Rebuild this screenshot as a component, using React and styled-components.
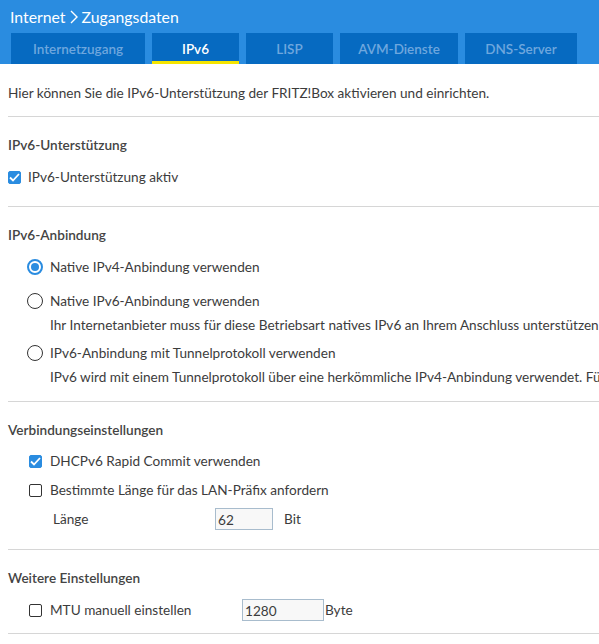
import React, { useState } from 'react';
import styled, { createGlobalStyle } from 'styled-components';

const GlobalStyle = createGlobalStyle`
  html, body {
    margin: 0;
    padding: 0;
    background: #fff;
  }
  body {
    font-family: Lato, "Noto Sans", sans-serif;
    color: #3c3c3c;
    overflow: hidden;
  }
`;

const Page = styled.div`
  width: 599px;
  overflow: hidden;
`;

const Header = styled.header`
  background: #2a8ce0;
  padding: 0 0 0 10px;
`;

const Breadcrumb = styled.h1`
  margin: 0;
  height: 33px;
  display: flex;
  align-items: center;
  gap: 4px;
  font-size: 15.8px;
  font-weight: 400;
  color: #fff;
`;

const TabBar = styled.nav`
  display: flex;
  gap: 7px;
  margin-left: 1px;
`;

const Tab = styled.button`
  width: ${(p) => p.$width}px;
  height: 31px;
  border: none;
  border-bottom: 3px solid ${(p) => (p.$active ? '#f5e500' : 'transparent')};
  padding: 3px 0 0;
  background: #066ac1;
  color: ${(p) => (p.$active ? '#fff' : '#6ea7de')};
  font-family: inherit;
  font-size: 13.5px;
  font-weight: 600;
  cursor: pointer;
`;

const Intro = styled.p`
  margin: 19px 0 13px 8px;
  line-height: 20px;
  font-size: 13.6px;
  white-space: nowrap;
`;

const Section = styled.section`
  border-top: 1px solid #d6d6d6;
  margin-left: 8px;
  padding: 18px 0 ${(p) => p.$bottom}px;
`;

const Heading = styled.h2`
  margin: 0 0 ${(p) => p.$after}px;
  line-height: 20px;
  font-size: 13.6px;
  font-weight: 600;
  color: #444;
`;

const Option = styled.label`
  display: flex;
  align-items: center;
  gap: 7px;
  height: 20px;
  width: ${(p) => (p.$width ? `${p.$width}px` : 'auto')};
  box-sizing: border-box;
  margin: ${(p) => p.$top || 0}px 0 0 ${(p) => p.$indent || 0}px;
  font-size: 13.6px;
  white-space: nowrap;
  flex-shrink: 0;
  cursor: pointer;
`;

const Slot = styled.span`
  width: 16px;
  display: flex;
  justify-content: center;
  flex-shrink: 0;
`;

const Box = styled.span`
  width: 13px;
  height: 13px;
  box-sizing: border-box;
  border-radius: 2px;
  border: 1px solid ${(p) => (p.$on ? '#2a8ce0' : '#333')};
  background: ${(p) => (p.$on ? '#2a8ce0' : '#fff')};
  display: flex;
  align-items: center;
  justify-content: center;
  flex-shrink: 0;
`;

const Radio = styled.span`
  width: 16px;
  height: 16px;
  box-sizing: border-box;
  border-radius: 50%;
  border: ${(p) => (p.$on ? '2px solid #2a8ce0' : '1.5px solid #333')};
  display: flex;
  align-items: center;
  justify-content: center;
  flex-shrink: 0;

  &::after {
    content: '';
    width: 8px;
    height: 8px;
    border-radius: 50%;
    background: ${(p) => (p.$on ? '#2a8ce0' : 'transparent')};
  }
`;

const Hint = styled.div`
  margin: ${(p) => p.$top}px 0 0 42px;
  line-height: 20px;
  font-size: 13.6px;
  white-space: nowrap;
`;

const FieldRow = styled.div`
  display: flex;
  align-items: center;
  height: 22px;
  margin-top: ${(p) => p.$top}px;
  font-size: 13.6px;
  white-space: nowrap;
`;

const FieldLabel = styled.span`
  width: ${(p) => p.$width}px;
  padding-left: ${(p) => p.$indent}px;
  box-sizing: border-box;
  flex-shrink: 0;
`;

const NumberInput = styled.input`
  width: ${(p) => p.$width}px;
  height: 22px;
  box-sizing: border-box;
  border: 1px solid #a8bccd;
  background: #f8f8f8;
  padding: 2px 2px 0;
  margin: 0 ${(p) => p.$gap}px 0 0;
  font-family: inherit;
  font-size: 13.6px;
  color: #3c3c3c;
  flex-shrink: 0;
`;

const Chevron = () => (
  <svg width="8" height="14" viewBox="0 0 8 14">
    <path d="M1 1l6 6-6 6" fill="none" stroke="#fff" strokeWidth="1.4" />
  </svg>
);

const Check = ({ checked }) => (
  <Box $on={checked}>
    {checked && (
      <svg width="11" height="9" viewBox="0 0 11 9">
        <path d="M1 4.5l3 3L10 1" fill="none" stroke="#fff" strokeWidth="1.8" />
      </svg>
    )}
  </Box>
);

const tabs = [
  { label: 'Internetzugang', width: 134 },
  { label: 'IPv6', width: 87 },
  { label: 'LISP', width: 87 },
  { label: 'AVM-Dienste', width: 118 },
  { label: 'DNS-Server', width: 112 },
];

const modes = [
  { id: 'v4', label: 'Native IPv4-Anbindung verwenden' },
  {
    id: 'v6',
    label: 'Native IPv6-Anbindung verwenden',
    hint: 'Ihr Internetanbieter muss für diese Betriebsart natives IPv6 an Ihrem Anschluss unterstützen.',
  },
  {
    id: 'tunnel',
    label: 'IPv6-Anbindung mit Tunnelprotokoll verwenden',
    hint: 'IPv6 wird mit einem Tunnelprotokoll über eine herkömmliche IPv4-Anbindung verwendet. Für die Nutzung',
  },
];

export default function App() {
  const [tab, setTab] = useState('IPv6');
  const [mode, setMode] = useState('v4');

  return (
    <Page>
      <GlobalStyle />
      <Header>
        <Breadcrumb>
          Internet <Chevron /> Zugangsdaten
        </Breadcrumb>
        <TabBar>
          {tabs.map((t) => (
            <Tab key={t.label} $width={t.width} $active={tab === t.label} onClick={() => setTab(t.label)}>
              {t.label}
            </Tab>
          ))}
        </TabBar>
      </Header>

      <Intro>Hier können Sie die IPv6-Unterstützung der FRITZ!Box aktivieren und einrichten.</Intro>

      <Section $bottom={19}>
        <Heading $after={12}>IPv6-Unterstützung</Heading>
        <Option>
          <Check checked />
          IPv6-Unterstützung aktiv
        </Option>
      </Section>

      <Section $bottom={14}>
        <Heading $after={12}>IPv6-Anbindung</Heading>
        {modes.map((m, i) => (
          <React.Fragment key={m.id}>
            <Option $indent={19} $top={i === 0 ? 0 : i === 1 ? 14 : 8} onClick={() => setMode(m.id)}>
              <Slot>
                <Radio $on={mode === m.id} />
              </Slot>
              {m.label}
            </Option>
            {m.hint && <Hint $top={4}>{m.hint}</Hint>}
          </React.Fragment>
        ))}
      </Section>

      <Section $bottom={19}>
        <Heading $after={11}>Verbindungseinstellungen</Heading>
        <Option $indent={19}>
          <Slot>
            <Check checked />
          </Slot>
          DHCPv6 Rapid Commit verwenden
        </Option>
        <Option $indent={19} $top={9}>
          <Slot>
            <Check />
          </Slot>
          Bestimmte Länge für das LAN-Präfix anfordern
        </Option>
        <FieldRow $top={8}>
          <FieldLabel $indent={45} $width={207}>Länge</FieldLabel>
          <NumberInput $width={58} $gap={11} defaultValue="62" />
          Bit
        </FieldRow>
      </Section>

      <Section $bottom={12}>
        <Heading $after={11}>Weitere Einstellungen</Heading>
        <FieldRow $top={0}>
          <Option $indent={19} $width={215}>
            <Slot>
              <Check />
            </Slot>
            MTU manuell einstellen
          </Option>
          <NumberInput $width={82} $gap={1} defaultValue="1280" />
          Byte
        </FieldRow>
      </Section>
      <Section $bottom={0} />
    </Page>
  );
}
